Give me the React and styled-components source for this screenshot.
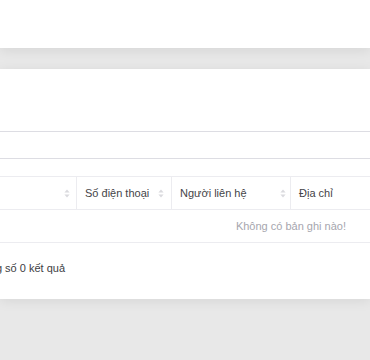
import React from "react";
import styled, { createGlobalStyle } from "styled-components";

const Global = createGlobalStyle`
  html, body { margin: 0; padding: 0; background: #e8e8e8; overflow: hidden; }
  body { font-family: "Liberation Sans", Arial, sans-serif; }
`;

const Page = styled.div`
  display: flex;
  flex-direction: column;
  gap: 21px;
  width: 370px;
  height: 360px;
`;

const TopBar = styled.div`
  height: 48px;
  background: #fff;
  box-shadow: 0 3px 12px rgba(0, 0, 0, 0.08);
`;

const Card = styled.div`
  background: #fff;
  height: 230px;
  box-shadow: 0 2px 12px rgba(0, 0, 0, 0.08);
  display: flex;
  flex-direction: column;
  padding-top: 62px;
  box-sizing: border-box;
`;

const SearchInput = styled.div`
  height: 28px;
  border-top: 1px solid #dddde3;
  border-bottom: 1px solid #dddde3;
  box-sizing: border-box;
`;

const Table = styled.div`
  margin-top: 17px;
  display: flex;
  flex-direction: column;
`;

const HeadRow = styled.div`
  display: flex;
  height: 34px;
  border-top: 1px solid #ececf0;
  border-bottom: 1px solid #ececf0;
  box-sizing: border-box;
`;

const HeadCell = styled.div`
  display: flex;
  align-items: center;
  justify-content: space-between;
  box-sizing: border-box;
  width: ${(p) => p.$w};
  flex: ${(p) => (p.$grow ? 1 : "none")};
  padding: 0 ${(p) => p.$pr}px 0 8px;
  border-left: ${(p) => (p.$first ? "none" : "1px solid #ececf0")};
  font-size: 11px;
  color: #444448;
  white-space: nowrap;
`;

const SortIcon = styled.svg`
  width: 6px;
  height: 9px;
  flex: none;
`;

const Sort = () => (
  <SortIcon viewBox="0 0 6 9">
    <path d="M3 0.5 L5.6 3.6 L0.4 3.6 Z" fill="#dadade" />
    <path d="M3 8.5 L5.6 5.4 L0.4 5.4 Z" fill="#dadade" />
  </SortIcon>
);

const EmptyRow = styled.div`
  display: flex;
  justify-content: flex-end;
  align-items: center;
  height: 33px;
  padding-right: 24px;
  padding-bottom: 1px;
  border-bottom: 1px solid #ececf0;
  box-sizing: border-box;
  font-size: 11px;
  color: #a6a6ae;
`;

const Footer = styled.div`
  display: flex;
  justify-content: flex-end;
  width: 65px;
  margin-top: 19px;
  font-size: 11px;
  color: #404044;
  white-space: nowrap;
`;

export default function App() {
  return (
    <>
      <Global />
      <Page>
        <TopBar />
        <Card>
          <SearchInput />
          <Table>
            <HeadRow>
              <HeadCell $w="76px" $pr={6} $first>
                <span />
                <Sort />
              </HeadCell>
              <HeadCell $w="95px" $pr={7}>
                <span>Số điện thoại</span>
                <Sort />
              </HeadCell>
              <HeadCell $w="119px" $pr={4}>
                <span>Người liên hệ</span>
                <Sort />
              </HeadCell>
              <HeadCell $grow $pr={8}>
                <span>Địa chỉ</span>
              </HeadCell>
            </HeadRow>
            <EmptyRow>Không có bản ghi nào!</EmptyRow>
          </Table>
          <Footer>
            <span>Hiển thị 0 - 0 trong số 0 kết quả</span>
          </Footer>
        </Card>
      </Page>
    </>
  );
}
